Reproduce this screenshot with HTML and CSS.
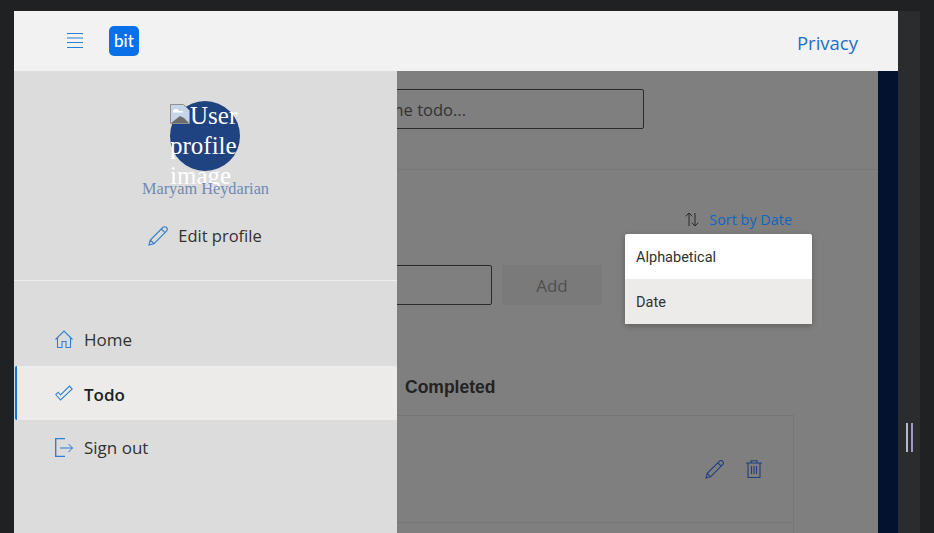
FILE: index.html
```html
<!DOCTYPE html>
<html lang="en">
<head>
<meta charset="utf-8">
<title>Todo</title>
<link rel="stylesheet" href="styles.css">
</head>
<body>
<div class="frame">
  <header class="topbar">
    <button class="menu-btn" aria-label="Menu">
      <svg width="16" height="15" viewBox="0 0 16 15"><path d="M0 .5h16M0 5h16M0 9.500h16M0 14.500h16" stroke="#2a7fd3" fill="none"/></svg>
    </button>
    <div class="logo">bit</div>
    <a class="privacy">Privacy</a>
  </header>
  <div class="workspace">
    <main class="main">
      <section class="search-bar">
        <input class="search" placeholder="Search some todo...">
      </section>
      <section class="content">
        <div class="sort-row">
          <svg class="sort-icon" width="14" height="15" viewBox="0 0 14 15"><path d="M4 14V1M.7 4.300 4 1l3.300 3.300M10 1v13M6.700 10.700 10 14l3.300-3.300" fill="none" stroke="#2b2b2b"/></svg>
          <span class="sort-label">Sort by Date</span>
          <ul class="sort-menu">
            <li class="sort-item">Alphabetical</li>
            <li class="sort-item selected">Date</li>
          </ul>
        </div>
        <div class="add-row">
          <input class="add-input">
          <button class="add-btn">Add</button>
        </div>
        <div class="tabs"><span class="tab">Completed</span></div>
        <div class="todo-card">
          <svg width="19" height="19" viewBox="0 0 19 19"><path d="M1 18l1.200-4.600L14.300 1.300a2 2 0 0 1 3.300 3.300L5.600 16.800zM2.200 13.400l3.400 3.400M12.800 2.800l3.400 3.400" fill="none" stroke="#1e3f80" stroke-width="1.100"/></svg>
          <svg width="16" height="18" viewBox="0 0 16 18"><path d="M0 3h16M2 3v14.500h12V3M5 3V.8h6V3M5.500 6v8M8 6v8M10.500 6v8" fill="none" stroke="#1e3f80" stroke-width="1.100"/></svg>
        </div>
        <div class="todo-card"></div>
      </section>
    </main>
    <div class="navy"></div>
    <aside class="panel">
      <div class="profile">
        <div class="avatar">
          <svg class="broken" width="20" height="20" viewBox="0 0 20 20"><path d="M.5.500h13l6 6v13H.5z" fill="#c6d6ea" stroke="#8f8f8f"/><path d="M1 19l9-7 4 2 5 5z" fill="#6d6d6d"/><path d="M3 7c1-3 5-3 6 0h4v1.500H3z" fill="#fff"/></svg>User profile image
        </div>
        <div class="name">Maryam Heydarian</div>
        <div class="edit">
          <svg width="20" height="20" viewBox="0 0 20 20"><path d="M1 19l1.300-5L14.800 1.500a2.300 2.300 0 0 1 3.700 3.700L6 17.700zM2.300 14 6 17.700M13.300 3l3.700 3.700" fill="none" stroke="#3d80c8" stroke-width="1.200"/></svg>
          <span>Edit profile</span>
        </div>
      </div>
      <nav class="nav">
        <a class="nav-item">
          <svg width="18" height="18" viewBox="0 0 18 18"><path d="M.5 9.500 9 1l8.500 8.500M2.500 7.500v10H7v-6h4v6h4.500v-10" fill="none" stroke="#2f80d4" stroke-width="1.100"/></svg>
          <span>Home</span>
        </a>
        <a class="nav-item active">
          <svg width="18" height="16" viewBox="0 0 18 16"><path d="M.7 9.500 5.500 15 17.300 4 14.500 1 5.500 10 3.300 7.200z" fill="none" stroke="#2f80d4" stroke-width="1.100"/></svg>
          <span>Todo</span>
        </a>
        <a class="nav-item">
          <svg width="18" height="19" viewBox="0 0 18 19"><path d="M10 .500H.700v18H10" fill="none" stroke="#2f80d4" stroke-width="1.400"/><path d="M5 10h12.500M13.500 6l4 4-4 4" fill="none" stroke="#2478d8"/></svg>
          <span>Sign out</span>
        </a>
      </nav>
    </aside>
  </div>
</div>
<div class="gutter"><div class="handle"></div></div>
</body>
</html>
```
FILE: styles.css
```css
* { box-sizing: border-box; }
html, body { margin: 0; height: 533px; overflow: hidden; }
body {
  display: flex;
  padding: 11px 14px 0;
  background: #202122;
  font-family: "Open Sans", "Liberation Sans", sans-serif;
}
.frame { width: 884px; height: 522px; display: flex; flex-direction: column; }
.gutter {
  width: 22px;
  background: #2b2c2d;
  display: flex;
  align-items: flex-start;
  justify-content: center;
  padding-top: 412px;
}
.handle {
  width: 7px;
  height: 29px;
  border-left: 2px solid #b9b9c6;
  border-right: 2px solid #9c9ccb;
}
.topbar {
  height: 60px;
  flex: none;
  background: #f2f2f2;
  display: flex;
  align-items: center;
  padding: 0 40px 0 53px;
}
.menu-btn { border: 0; background: none; padding: 0; display: flex; margin-bottom: 2px; }
.logo {
  width: 30px;
  height: 30px;
  margin-left: 26px;
  border-radius: 5px;
  background: #0a70e9;
  color: #fff;
  font: 500 17px/29px Lato, sans-serif;
  text-align: center;
}
.privacy { margin-left: auto; margin-top: 2px; font-size: 18.500px; color: #1b6fc8; }
.workspace { position: relative; flex: 1; display: flex; overflow: hidden; min-height: 0; }
.main { width: 864px; background: #7f7f7f; }
.navy { width: 20px; background: #03132f; }
.search-bar {
  height: 99px;
  padding-top: 18px;
  border-bottom: 1px solid #767676;
  display: flex;
  justify-content: center;
}
.search {
  width: 396px;
  height: 40px;
  padding: 0 0 0 65px;
  background: none;
  border: 1px solid #2a2a2a;
  border-radius: 2px;
  font: 16.500px "Open Sans", sans-serif;
}
.search::placeholder { color: #333; opacity: 1; }
.content { padding: 0 84px; }
.sort-row {
  position: relative;
  height: 95px;
  padding: 42px 2px 0 0;
  display: flex;
  justify-content: flex-end;
  align-items: flex-start;
  gap: 10px;
}
.sort-label { font-size: 14.400px; line-height: 16px; color: #0f66c2; }
.sort-icon { flex: none; }
.sort-menu {
  position: absolute;
  top: 64px;
  right: -18px;
  width: 187px;
  margin: 0;
  padding: 0;
  list-style: none;
  background: #fff;
  border-radius: 2px;
  box-shadow: 0 2px 6px rgba(0, 0, 0, .25);
}
.sort-item {
  height: 45px;
  padding-left: 11px;
  font: 14.500px/47px Roboto, sans-serif;
  color: #323130;
}
.sort-item.selected { background: #edebe9; }
.add-row { display: flex; justify-content: center; gap: 10px; }
.add-input {
  width: 202px;
  height: 40px;
  background: none;
  border: 1px solid #2a2a2a;
  border-radius: 2px;
}
.add-btn {
  width: 100px;
  height: 40px;
  border: 0;
  border-radius: 2px;
  background: #7a7a7a;
  color: #4f4f4f;
  font: 17px "Open Sans", sans-serif;
}
.tabs { padding: 71px 0 17px 307px; }
.tab { font: 700 17.500px/20px "Liberation Sans", sans-serif; color: #232323; }
.todo-card {
  height: 107px;
  border: 1px solid #767676;
  border-bottom: 0;
  display: flex;
  align-items: center;
  justify-content: flex-end;
  gap: 22px;
  padding: 0 31px 0 0;
}
.panel {
  position: absolute;
  left: 0;
  top: 0;
  bottom: 0;
  width: 383px;
  background: #dcdcdc;
}
.profile {
  height: 210px;
  padding-top: 30px;
  border-bottom: 1px solid #eeeeee;
  display: flex;
  flex-direction: column;
  align-items: center;
}
.avatar {
  width: 70px;
  height: 70px;
  flex: none;
  margin-right: 1px;
  border-radius: 50%;
  background: #1f4280;
  color: #fff;
  font: 25px/30px "Liberation Serif", serif;
}
.broken { display: inline-block; }
.name {
  margin-top: 9px;
  font: 16.300px/18px "Liberation Serif", serif;
  color: #6f89b3;
}
.edit {
  margin-top: 26px;
  margin-left: -1px;
  display: flex;
  align-items: center;
  gap: 10px;
  font-size: 16.500px;
  color: #323130;
}
.nav { padding: 31px 0 0 1px; }
.nav-item {
  height: 54px;
  padding-left: 38px;
  display: flex;
  align-items: center;
  gap: 11px;
  font-size: 17px;
  color: #323130;
  border-left: 2px solid transparent;
  border-radius: 2px;
}
.nav-item svg { flex: none; }
.nav-item.active {
  background: #edebe9;
  border-left-color: #0f6fd8;
  font-weight: 600;
  color: #201f1e;
}
.nav-item.active span { padding-top: 2px; }
```
